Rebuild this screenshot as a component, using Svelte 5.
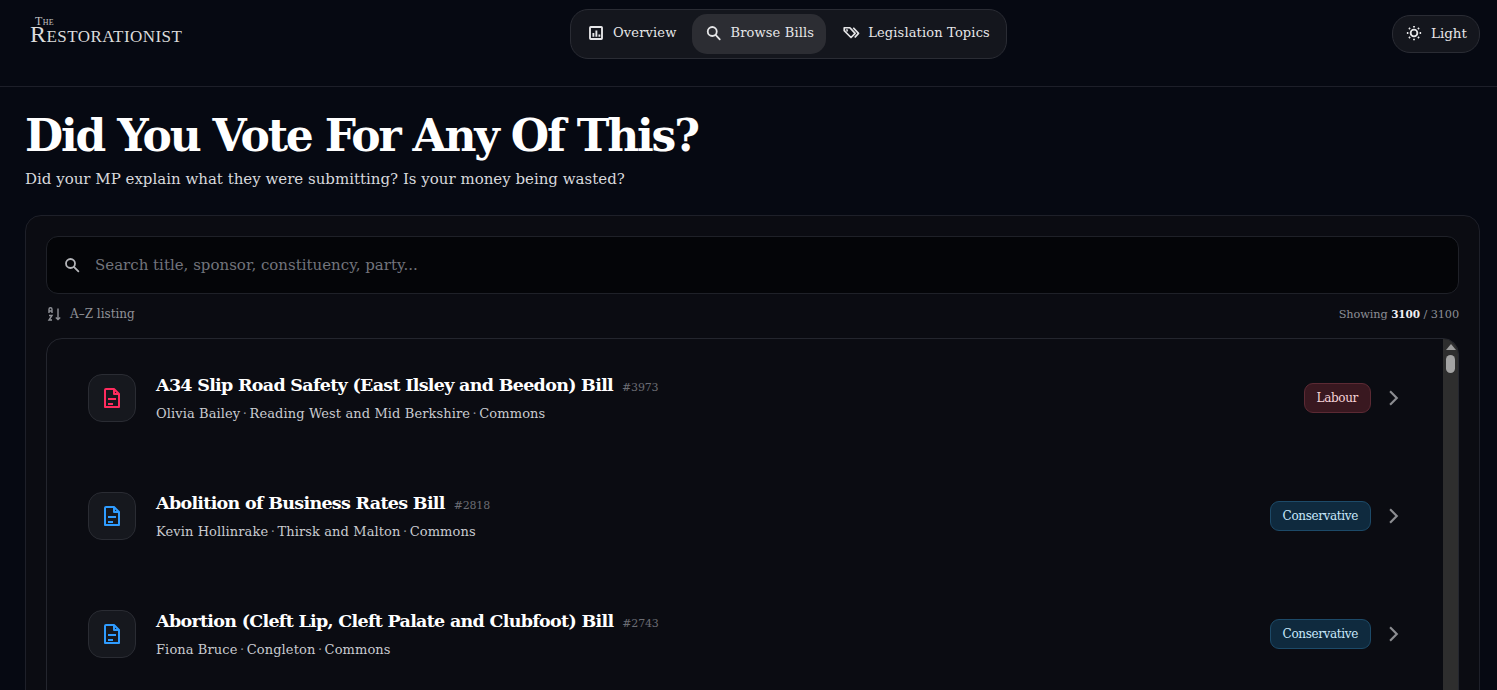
<script lang="ts">
	const bills = [
		{ title: 'A34 Slip Road Safety (East Ilsley and Beedon) Bill', id: 3973, sponsor: 'Olivia Bailey', seat: 'Reading West and Mid Berkshire', party: 'Labour' },
		{ title: 'Abolition of Business Rates Bill', id: 2818, sponsor: 'Kevin Hollinrake', seat: 'Thirsk and Malton', party: 'Conservative' },
		{ title: 'Abortion (Cleft Lip, Cleft Palate and Clubfoot) Bill', id: 2743, sponsor: 'Fiona Bruce', seat: 'Congleton', party: 'Conservative' }
	];
</script>

<div class="page">
	<header class="topbar">
		<a class="logo" href="#top">
			<span class="logo-the">The</span>
			<span class="logo-name">Restorationist</span>
		</a>

		<nav class="nav">
			<button class="nav-item">
				<svg viewBox="0 0 24 24" width="18" height="18" fill="none" stroke="currentColor" stroke-width="2.5">
					<rect x="4" y="4" width="16" height="16" rx="1"/>
					<path d="M8.5 17v-5M12.5 17V8.5M16.5 17v-3"/>
				</svg>
				Overview
			</button>
			<button class="nav-item active">
				<svg viewBox="0 0 24 24" width="18" height="18" fill="none" stroke="currentColor" stroke-width="2.4">
					<circle cx="11" cy="10" r="6"/>
					<path d="M15.5 14.5L21 20.5" stroke-linecap="round"/>
				</svg>
				Browse Bills
			</button>
			<button class="nav-item">
				<svg viewBox="0 0 24 24" width="18" height="18" fill="none" stroke="currentColor" stroke-width="2.3" stroke-linejoin="round">
					<path d="M3 5h7.5l7 7.5-5.5 5.5-9-9z"/>
					<path d="M15 5l7 7.5-5 5.5"/>
					<circle cx="6.5" cy="8.5" r="0.5"/>
				</svg>
				Legislation Topics
			</button>
		</nav>

		<button class="theme">
			<svg viewBox="0 0 24 24" width="18" height="18" fill="none" stroke="currentColor" stroke-width="2.4">
				<circle cx="12" cy="12" r="4.5"/>
				<path d="M12 2.5v2M12 19.5v2M2.5 12h2M19.5 12h2M5.3 5.3l1.4 1.4M17.3 17.3l1.4 1.4M5.3 18.7l1.4-1.4M17.3 6.7l1.4-1.4"/>
			</svg>
			Light
		</button>
	</header>

	<main class="content">
		<h1>Did You Vote For Any Of This?</h1>
		<p class="lead">Did your MP explain what they were submitting? Is your money being wasted?</p>

		<section class="card">
			<label class="search">
				<svg viewBox="0 0 24 24" width="18" height="18" fill="none" stroke="currentColor" stroke-width="2.4">
					<circle cx="10" cy="10" r="6"/>
					<path d="M14.5 14.5L20.5 20.5" stroke-linecap="round"/>
				</svg>
				<input type="text" placeholder="Search title, sponsor, constituency, party..." />
			</label>

			<div class="meta">
				<span class="sort">
					<svg viewBox="0 0 16 16" width="16" height="16" fill="none" stroke="currentColor" stroke-width="1.4">
						<path d="M3 7V3.2a1.4 1.4 0 0 1 3 0V7M3 5h3M3 9.5h3L3 14h3"/>
						<path d="M12 2.5v11M9.8 11.4l2.2 2.2 2.2-2.2"/>
					</svg>
					A–Z listing
				</span>
				<span class="count">Showing <b>3100</b> / 3100</span>
			</div>

			<div class="list">
				<div class="rows">
					{#each bills as bill}
						<a class="row" href="#top">
							<span class="tile" class:labour={bill.party === 'Labour'}>
								<svg viewBox="0 0 24 24" width="24" height="24" fill="none" stroke="currentColor" stroke-width="2" stroke-linejoin="round">
									<path d="M6 3h8l5 5v13H5V4a1 1 0 0 1 1-1z"/>
									<path d="M14 3v5h5M8 13h8M8 18h5"/>
								</svg>
							</span>
							<span class="body">
								<span class="title-line">
									<span class="title">{bill.title}</span>
									<span class="num">#{bill.id}</span>
								</span>
								<span class="sub">{bill.sponsor}<i>·</i>{bill.seat}<i>·</i>Commons</span>
							</span>
							<span class="pill" class:labour={bill.party === 'Labour'}>{bill.party}</span>
							<svg class="chev" viewBox="0 0 24 24" width="20" height="20" fill="none" stroke="currentColor" stroke-width="2.6">
								<path d="M8.5 4l8 8-8 8"/>
							</svg>
						</a>
					{/each}
				</div>
				<div class="scrollbar" aria-hidden="true">
					<span class="arrow"></span>
					<span class="thumb"></span>
				</div>
			</div>
		</section>
	</main>
</div>

<style>
	:global(body) {
		background: #060912;
		color: #fff;
		font-family: "DejaVu Serif", "Liberation Serif", serif;
		overflow: hidden;
	}

	.page {
		height: 100vh;
		overflow: hidden;
	}

	.topbar {
		display: flex;
		align-items: flex-start;
		justify-content: space-between;
		height: 87px;
		box-sizing: border-box;
		padding: 9px 17px 0 30px;
		border-bottom: 1px solid #1d1f29;
	}

	.logo {
		display: flex;
		flex-direction: column;
		width: 155px;
		margin-top: 8px;
		color: #dcdcdc;
		text-decoration: none;
		font-family: "Liberation Serif", serif;
		font-variant: small-caps;
		text-transform: capitalize;
		line-height: 1;
	}

	.logo-the {
		font-size: 12px;
		line-height: 9px;
		margin-left: 5px;
		color: #c4c4c4;
		letter-spacing: 0.3px;
	}

	.logo-name {
		font-size: 24px;
		line-height: 17px;
		letter-spacing: 0.45px;
		text-transform: lowercase;
	}

	.logo-name::first-letter {
		text-transform: uppercase;
	}

	.nav {
		display: flex;
		gap: 4px;
		height: 50px;
		box-sizing: border-box;
		padding: 4px;
		background: #14161d;
		border: 1px solid #2a2c34;
		border-radius: 18px;
	}

	.nav-item {
		display: flex;
		align-items: center;
		gap: 8px;
		padding: 0 12px 3px;
		background: none;
		border: none;
		border-radius: 15px;
		color: #e6e6e8;
		font: 13px "DejaVu Serif", serif;
		letter-spacing: 0.15px;
	}

	.nav-item.active {
		background: #2c2d33;
	}

	.theme {
		display: flex;
		align-items: center;
		gap: 8px;
		height: 38px;
		margin-top: 6px;
		padding: 0 12px 2px;
		background: #14161d;
		border: 1px solid #2a2c34;
		border-radius: 18px;
		color: #e6e6e8;
		font: 13.5px "DejaVu Serif", serif;
	}

	.content {
		padding: 0 17px 0 25px;
	}

	h1 {
		margin: 19px 0 0;
		font-size: 44px;
		line-height: 60px;
		font-weight: 700;
		letter-spacing: -2.2px;
		color: #fff;
	}

	.lead {
		margin: 0;
		font-size: 15px;
		line-height: 26px;
		color: #d8d9dd;
	}

	.card {
		margin-top: 23px;
		padding: 20px 20px 0;
		height: 600px;
		background: #0b0c12;
		border: 1px solid #1e2029;
		border-radius: 16px;
	}

	.search {
		display: flex;
		align-items: center;
		gap: 12px;
		height: 58px;
		box-sizing: border-box;
		padding: 0 16px;
		background: #040508;
		border: 1px solid #1f2128;
		border-radius: 12px;
		color: #b5b6ba;
	}

	.search input {
		flex: 1;
		background: none;
		border: none;
		outline: none;
		color: #fff;
		font: 15px "DejaVu Serif", serif;
	}

	.search input::placeholder {
		color: #72747c;
	}

	.meta {
		display: flex;
		justify-content: space-between;
		align-items: center;
		height: 44px;
		padding-bottom: 4px;
		box-sizing: border-box;
		font-size: 12px;
		color: #8c8e95;
	}

	.sort {
		display: flex;
		align-items: center;
		gap: 8px;
		color: #8f9197;
	}

	.count {
		font-size: 11.3px;
		letter-spacing: -0.1px;
	}

	.count b {
		font-size: 10.5px;
		color: #f0f0f2;
	}

	.list {
		display: flex;
		height: 560px;
		overflow: hidden;
		border: 1px solid #24262e;
		border-radius: 16px;
	}

	.rows {
		flex: 1;
		min-width: 0;
	}

	.row {
		display: flex;
		align-items: center;
		gap: 20px;
		height: 118px;
		box-sizing: border-box;
		padding: 0 40px 0 41px;
		color: inherit;
		text-decoration: none;
	}

	.tile {
		display: flex;
		align-items: center;
		justify-content: center;
		width: 48px;
		height: 48px;
		box-sizing: border-box;
		background: #16181e;
		border: 1px solid #2a2c33;
		border-radius: 14px;
		color: #2f9cff;
	}

	.tile.labour {
		color: #ff2b5e;
	}

	.body {
		flex: 1;
		display: flex;
		flex-direction: column;
		gap: 11px;
	}

	.title-line {
		display: flex;
		align-items: baseline;
		gap: 9px;
	}

	.title {
		font-size: 17.5px;
		font-weight: 700;
		letter-spacing: -0.7px;
		color: #fff;
	}

	.num {
		font-size: 11px;
		letter-spacing: -0.2px;
		color: #6b6d74;
	}

	.sub {
		font-size: 13px;
		letter-spacing: 0.1px;
		color: #c9cbd0;
	}

	.sub i {
		font-style: normal;
		margin: 0 2.5px;
		color: #8f9197;
	}

	.pill {
		display: flex;
		align-items: center;
		height: 30px;
		box-sizing: border-box;
		padding: 0 12px;
		background: #0f2a3e;
		border: 1px solid #1d4a68;
		border-radius: 9px;
		color: #c9e8fb;
		font-size: 12px;
		letter-spacing: -0.35px;
	}

	.pill.labour {
		background: #391820;
		border-color: #5c2a34;
		color: #f5d3d8;
	}

	.chev {
		margin-left: -8px;
		color: #8c8d91;
	}

	.scrollbar {
		flex: none;
		display: flex;
		flex-direction: column;
		align-items: center;
		width: 15px;
		background: #2e2e2e;
	}

	.arrow {
		margin-top: 5px;
		width: 0;
		height: 0;
		border-left: 5px solid transparent;
		border-right: 5px solid transparent;
		border-bottom: 6px solid #9c9c9c;
	}

	.thumb {
		margin-top: 5px;
		width: 9px;
		height: 18px;
		border-radius: 5px;
		background: #a3a3a3;
	}
</style>
